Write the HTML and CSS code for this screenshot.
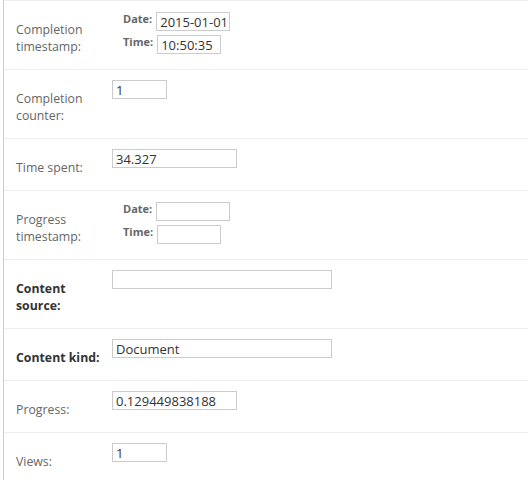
FILE: index.html
```html
<!DOCTYPE html>
<html>
<head>
<meta charset="utf-8">
<link rel="stylesheet" href="styles.css">
</head>
<body>
<fieldset class="module">
  <div class="form-row">
    <label class="field-label">Completion timestamp:</label>
    <div class="datetime">
      <div class="dt-line dt-date"><span class="dt-label">Date:</span><input class="vInput w-date" type="text" value="2015-01-01"></div>
      <div class="dt-line dt-time"><span class="dt-label">Time:</span><input class="vInput w-time" type="text" value="10:50:35"></div>
    </div>
  </div>
  <div class="form-row">
    <label class="field-label">Completion counter:</label>
    <input class="vInput w-sm" type="text" value="1">
  </div>
  <div class="form-row">
    <label class="field-label">Time spent:</label>
    <input class="vInput w-md" type="text" value="34.327">
  </div>
  <div class="form-row">
    <label class="field-label">Progress timestamp:</label>
    <div class="datetime">
      <div class="dt-line dt-date"><span class="dt-label">Date:</span><input class="vInput w-date" type="text" value=""></div>
      <div class="dt-line dt-time"><span class="dt-label">Time:</span><input class="vInput w-time" type="text" value=""></div>
    </div>
  </div>
  <div class="form-row">
    <label class="field-label required">Content source:</label>
    <input class="vInput w-lg" type="text" value="">
  </div>
  <div class="form-row">
    <label class="field-label required">Content kind:</label>
    <input class="vInput w-lg" type="text" value="Document">
  </div>
  <div class="form-row">
    <label class="field-label">Progress:</label>
    <input class="vInput w-md" type="text" value="0.129449838188">
  </div>
  <div class="form-row">
    <label class="field-label">Views:</label>
    <input class="vInput w-sm" type="text" value="1">
  </div>
</fieldset>
</body>
</html>
```
FILE: styles.css
```css
html, body {
  margin: 0;
  padding: 0;
  background: #fff;
}
body {
  font-family: "Open Sans", "DejaVu Sans", sans-serif;
  color: #333;
}
.module {
  margin: 0 0 0 3px;
  padding: 0;
  border: 0;
  border-left: 1px solid #ccc;
  border-top: 1px solid #eee;
  min-width: 0;
}
.form-row {
  display: flex;
  align-items: flex-start;
  padding: 10px 0 10px 12px;
  border-bottom: 1px solid #eee;
}
.field-label {
  width: 96px;
  flex: none;
  box-sizing: border-box;
  padding: 10px 8px 4px 0;
  font-size: 12.3px;
  line-height: 17px;
  color: #666;
}
.field-label.required {
  font-weight: bold;
  color: #333;
}
.vInput {
  box-sizing: border-box;
  height: 19px;
  margin: 0;
  padding: 0 3px;
  border: 1px solid #ccc;
  border-radius: 0;
  font-family: "Open Sans", "DejaVu Sans", sans-serif;
  font-size: 13px;
  color: #333;
  background: #fff;
  outline: none;
}
.w-sm { width: 55px; }
.w-md { width: 125px; }
.w-lg { width: 220px; }
.w-date { width: 74px; }
.w-time { width: 64px; }
.datetime {
  display: flex;
  flex-direction: column;
  gap: 4px;
  padding-left: 11px;
  padding-top: 1px;
}
.dt-line {
  display: flex;
  align-items: flex-start;
}
.dt-label {
  font-size: 11px;
  font-weight: bold;
  color: #666;
  line-height: 14px;
  margin-right: 4px;
  margin-top: 0;
}
```
